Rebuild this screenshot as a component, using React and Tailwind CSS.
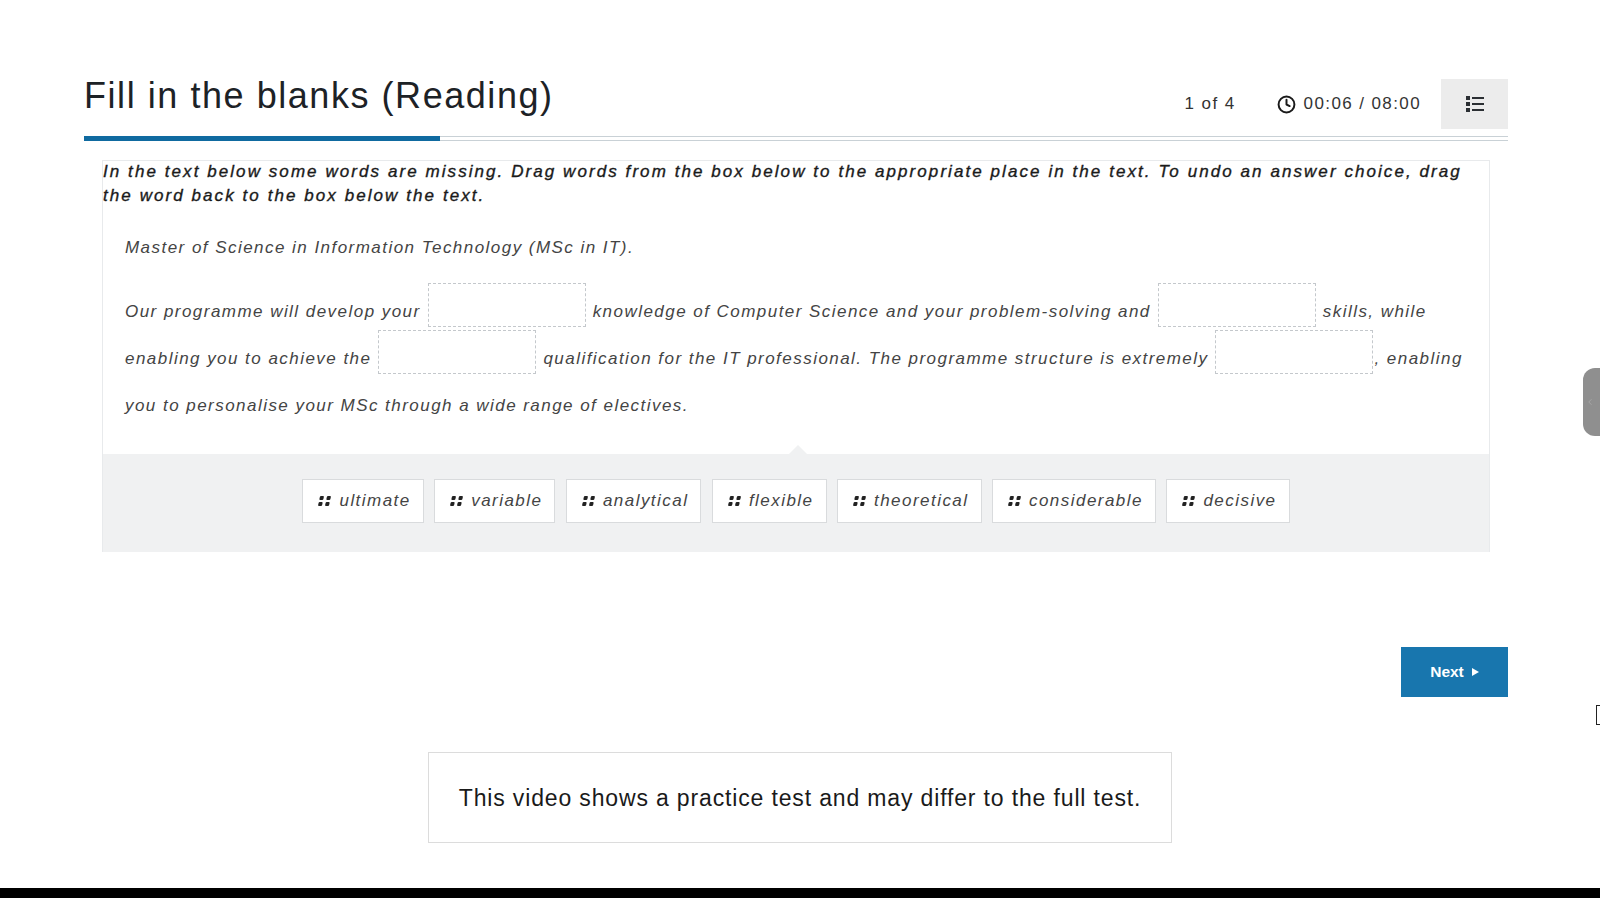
import React from 'react';
import { Clock, ChevronLeft } from 'lucide-react';

const WORDS = ['ultimate', 'variable', 'analytical', 'flexible', 'theoretical', 'considerable', 'decisive'];

const Blank = ({ last }) => (
  <span className={`inline-block w-[158px] h-[44px] -mt-[5px] ml-[7px] ${last ? 'mr-[1px]' : 'mr-[7px]'} align-[-10px] border border-dashed border-[#c4c8cc]`} />
);

const Grip = () => (
  <span className="grid grid-cols-2 gap-[2px] w-[11px] shrink-0 -skew-x-12">
    {[0, 1, 2, 3].map(i => <span key={i} className="w-[4px] h-[4px] rounded-[1px] bg-[#222]" />)}
  </span>
);

const ListIcon = () => (
  <svg width="18" height="16" viewBox="0 0 18 16" fill="#2b2f33">
    <rect x="0" y="0" width="4" height="4" />
    <rect x="0" y="6" width="4" height="4" />
    <rect x="0" y="12" width="4" height="4" />
    <rect x="6" y="1" width="12" height="2" />
    <rect x="6" y="7" width="12" height="2" />
    <rect x="6" y="13" width="12" height="2" />
  </svg>
);

export default function App() {
  return (
    <div className="relative w-[1600px] h-[898px] overflow-hidden bg-white flex flex-col font-['Liberation_Sans',Arial,sans-serif] text-[#222]">
      <div className="flex-1 flex flex-col pl-[84px] pr-[92px] pt-[79px]">
        {/* Header */}
        <div className="flex items-start justify-between h-[57px]">
          <h1 className="text-[36px] leading-[36px] tracking-[1.55px] font-normal text-[#1d2226] -mt-[1px]">Fill in the blanks (Reading)</h1>
          <div className="flex items-center h-[50px] text-[17px] tracking-[1.4px] text-[#333]">
            <span>1 of 4</span>
            <span className="flex items-center gap-[8px] ml-[41px]">
              <Clock size={19} strokeWidth={2.5} color="#1a1a1a" />
              00:06 / 08:00
            </span>
            <button className="flex items-center justify-center w-[67px] h-[50px] ml-[20px] bg-[#ececec]">
              <ListIcon />
            </button>
          </div>
        </div>

        {/* Progress */}
        <div className="relative h-[5px] border-y border-[#c9d1d6] bg-white">
          <div className="absolute left-0 -top-[1px] w-[356px] h-[5px] bg-[#0f6aa0]" />
        </div>

        {/* Question card */}
        <div className="mx-[18px] mt-[19px] border-x border-t border-[#e8eaec]">
          <p className="italic text-[17px] leading-[23.5px] tracking-[2.07px] [-webkit-text-stroke:0.35px_#1a1a1a] text-[#1a1a1a] -mt-[1px]">
            In the text below some words are missing. Drag words from the box below to the appropriate place in the text. To undo an answer choice, drag the word back to the box below the text.
          </p>
          <div className="px-[22px] pt-[29px] italic text-[17px] tracking-[1.46px] text-[#444]">
            <p className="leading-[24px]">Master of Science in Information Technology (MSc in IT).</p>
            <p className="leading-[47px] mt-[28px] pb-[25px]">
              Our programme will develop your<Blank />knowledge of Computer Science and your problem-solving and<Blank />skills, while enabling you to achieve the<Blank />qualification for the IT professional. The programme structure is extremely<Blank last />, enabling you to personalise your MSc through a wide range of electives.
            </p>
          </div>
          <div className="relative flex justify-center gap-[10.5px] h-[98px] pt-[25px] bg-[#f0f1f2]">
            <span className="absolute left-[686px] -top-[9px] w-0 h-0 border-x-[9px] border-x-transparent border-b-[9px] border-b-[#f0f1f2]" />
            {WORDS.map(word => (
              <div key={word} className="flex items-center gap-[9px] h-[44px] pl-[16px] pr-[12px] bg-white border border-[#d9dbdd] italic text-[17px] tracking-[1.46px] text-[#444]">
                <Grip />
                {word}
              </div>
            ))}
          </div>
        </div>

        {/* Next */}
        <div className="flex justify-end mt-[95px]">
          <button className="flex items-center justify-center gap-[8px] w-[107px] h-[50px] bg-[#1876ae] text-white text-[15.5px] font-bold">
            Next
            <span className="w-0 h-0 border-y-[4px] border-y-transparent border-l-[7px] border-l-white" />
          </button>
        </div>

        {/* Notice */}
        <div className="self-center flex items-center justify-center w-[744px] h-[91px] ml-[8px] mt-[55px] pt-[1px] border border-[#dcdcdc] text-[23px] tracking-[0.85px] text-[#1a1a1a]">
          This video shows a practice test and may differ to the full test.
        </div>
      </div>

      <div className="h-[10px] bg-black" />

      {/* Side handle and cursor over the page */}
      <div className="absolute right-0 top-[368px] w-[17px] h-[68px] rounded-l-[12px] bg-[#8f8f8f] flex items-center pl-[2px]">
        <ChevronLeft size={10} color="#aaaaaa" />
      </div>
      <div className="absolute right-0 top-[705px] w-[4px] h-[20px] border border-r-0 border-[#222]" />
    </div>
  );
}
